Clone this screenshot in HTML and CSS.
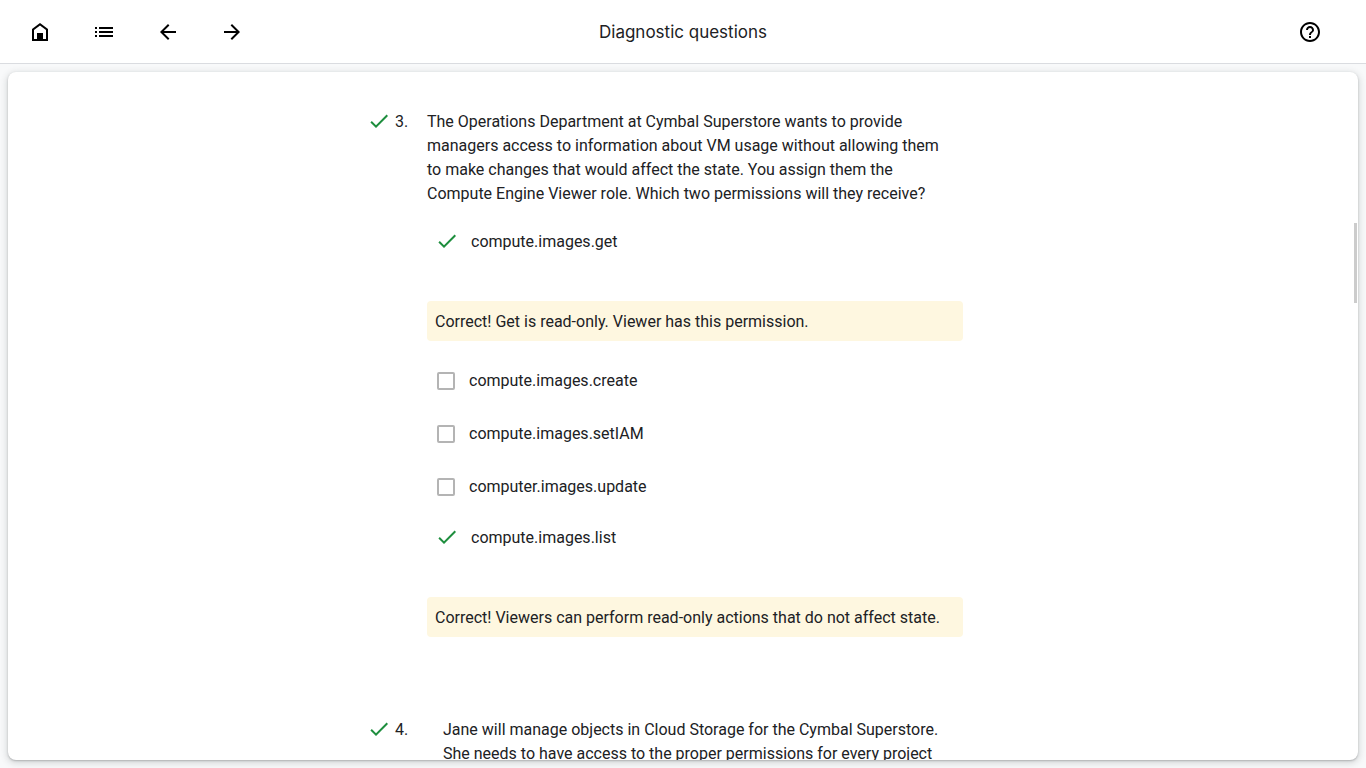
FILE: index.html
```html
<!DOCTYPE html>
<html lang="en">
<head>
<meta charset="utf-8">
<meta name="viewport" content="width=device-width, initial-scale=1">
<title>Diagnostic questions</title>
<link rel="stylesheet" href="styles.css">
</head>
<body class="page">
<svg class="sprite" aria-hidden="true">
  <symbol id="check" viewBox="0 1 24 24"><path d="M9 16.17 4.83 12l-1.42 1.41L9 19 21 7l-1.41-1.41z"/></symbol>
</svg>
<header class="topbar">
  <nav class="nav" aria-label="Course">
    <button class="icon-button" type="button" aria-label="Home"><svg class="icon" viewBox="0 0 24 24"><path fill-rule="evenodd" d="M4 21V9l8-6 8 6v12zM6 19h3v-6h6v6h3v-9l-6-4.500L6 10z"/></svg></button>
    <button class="icon-button" type="button" aria-label="Outline"><svg class="icon" viewBox="0 0 24 24"><path d="M3 7h2v2H3zM3 11h2v2H3zM3 15h2v2H3zM7 7h14v2H7zM7 11h14v2H7zM7 15h14v2H7z"/></svg></button>
    <button class="icon-button" type="button" aria-label="Previous"><svg class="icon" viewBox="0 0 24 24"><path d="M20 11H7.830l5.590-5.590L12 4l-8 8 8 8 1.410-1.410L7.830 13H20z"/></svg></button>
    <button class="icon-button" type="button" aria-label="Next"><svg class="icon" viewBox="0 0 24 24"><path d="M12 4l-1.410 1.410L16.170 11H4v2h12.170l-5.580 5.590L12 20l8-8z"/></svg></button>
  </nav>
  <h1 class="title">Diagnostic questions</h1>
  <button class="icon-button help" type="button" aria-label="Help"><svg class="icon" viewBox="0 0 24 24"><path d="M11 18h2v-2h-2v2zm1-16C6.480 2 2 6.480 2 12s4.480 10 10 10 10-4.480 10-10S17.520 2 12 2zm0 18c-4.410 0-8-3.590-8-8s3.590-8 8-8 8 3.590 8 8-3.590 8-8 8zm0-14c-2.210 0-4 1.790-4 4h2c0-1.100.9-2 2-2s2 .9 2 2c0 2-3 1.750-3 5h2c0-2.250 3-2.500 3-5 0-2.210-1.790-4-4-4z"/></svg></button>
</header>
<main class="card">
  <div class="questions">
    <section class="question">
      <svg class="icon correct" role="img" aria-label="Correct"><use href="#check"/></svg>
      <span class="number">3.</span>
      <div class="content">
        <p class="prompt">The Operations Department at Cymbal Superstore wants to provide managers access to information about VM usage without allowing them to make changes that would affect the state. You assign them the Compute Engine Viewer role. Which two permissions will they receive?</p>
        <div class="answer"><svg class="icon correct" role="img" aria-label="Correct"><use href="#check"/></svg><span>compute.images.get</span></div>
        <p class="note">Correct! Get is read-only. Viewer has this permission.</p>
        <div class="options">
          <label class="option"><input class="box" type="checkbox">compute.images.create</label>
          <label class="option"><input class="box" type="checkbox">compute.images.setIAM</label>
          <label class="option"><input class="box" type="checkbox">computer.images.update</label>
        </div>
        <div class="answer"><svg class="icon correct" role="img" aria-label="Correct"><use href="#check"/></svg><span>compute.images.list</span></div>
        <p class="note">Correct! Viewers can perform read-only actions that do not affect state.</p>
      </div>
    </section>
    <section class="question">
      <svg class="icon correct" role="img" aria-label="Correct"><use href="#check"/></svg>
      <span class="number">4.</span>
      <div class="content">
        <p class="prompt indented">Jane will manage objects in Cloud Storage for the Cymbal Superstore. She needs to have access to the proper permissions for every project</p>
      </div>
    </section>
  </div>
  <div class="scroll-thumb"></div>
</main>
</body>
</html>
```

FILE: styles.css
```css
* { box-sizing: border-box; }

.page {
  display: flex;
  flex-direction: column;
  height: 100vh;
  margin: 0;
  overflow: hidden;
  background: #f8f9fa;
  color: #202124;
  font: 16px/24px Roboto, sans-serif;
}

.sprite { position: absolute; width: 0; height: 0; }

.topbar {
  display: grid;
  grid-template-columns: 1fr auto 1fr;
  align-items: center;
  flex: none;
  height: 64px;
  padding: 0 16px;
  background: #fff;
  border-bottom: 1px solid #dadce0;
}

.nav { display: flex; gap: 16px; }

.icon-button {
  display: grid;
  place-items: center;
  width: 48px;
  height: 48px;
  padding: 0;
  border: 0;
  border-radius: 50%;
  background: none;
  color: #000;
  cursor: pointer;
}

.help { justify-self: end; margin-right: 16px; }

.icon { display: block; flex: none; width: 24px; height: 24px; fill: currentColor; }

.title { margin: 0; font: 400 17px/24px Inter, sans-serif; }

.card {
  position: relative;
  flex: 1;
  min-height: 0;
  margin: 8px;
  padding: 38px 16px 0;
  overflow: hidden;
  background: #fff;
  border-radius: 8px;
  box-shadow: 0 1px 2px rgba(60, 64, 67, .3), 0 2px 6px 2px rgba(60, 64, 67, .15);
}

.questions {
  display: flex;
  flex-direction: column;
  gap: 81px;
  max-width: 632px;
  margin: 0 auto;
}

.question { display: grid; grid-template-columns: 28px 32px 1fr; padding-right: 36px; }

.correct { color: #1e8e3e; }

.prompt { margin: 0 0 24px; padding-right: 16px; }

.indented { padding-left: 16px; }

.answer { display: flex; gap: 12px; padding-left: 8px; }

.note {
  margin: 47px 0 0;
  padding: 9px 8px 7px;
  background: #fef7e0;
  border-radius: 4px;
}

.options { display: grid; gap: 1px; padding: 14px 0 13px; }

.option { display: flex; align-items: center; gap: 14px; height: 52px; padding-left: 10px; }

.box {
  appearance: none;
  flex: none;
  width: 18px;
  height: 18px;
  margin: 0;
  border: 2px solid #b4b4b4;
  border-radius: 2px;
}

.box:checked { background: #1e8e3e; border-color: #1e8e3e; }

.scroll-thumb {
  position: absolute;
  top: 22%;
  right: 1px;
  width: 3px;
  height: 80px;
  background: #ccc;
}
```
